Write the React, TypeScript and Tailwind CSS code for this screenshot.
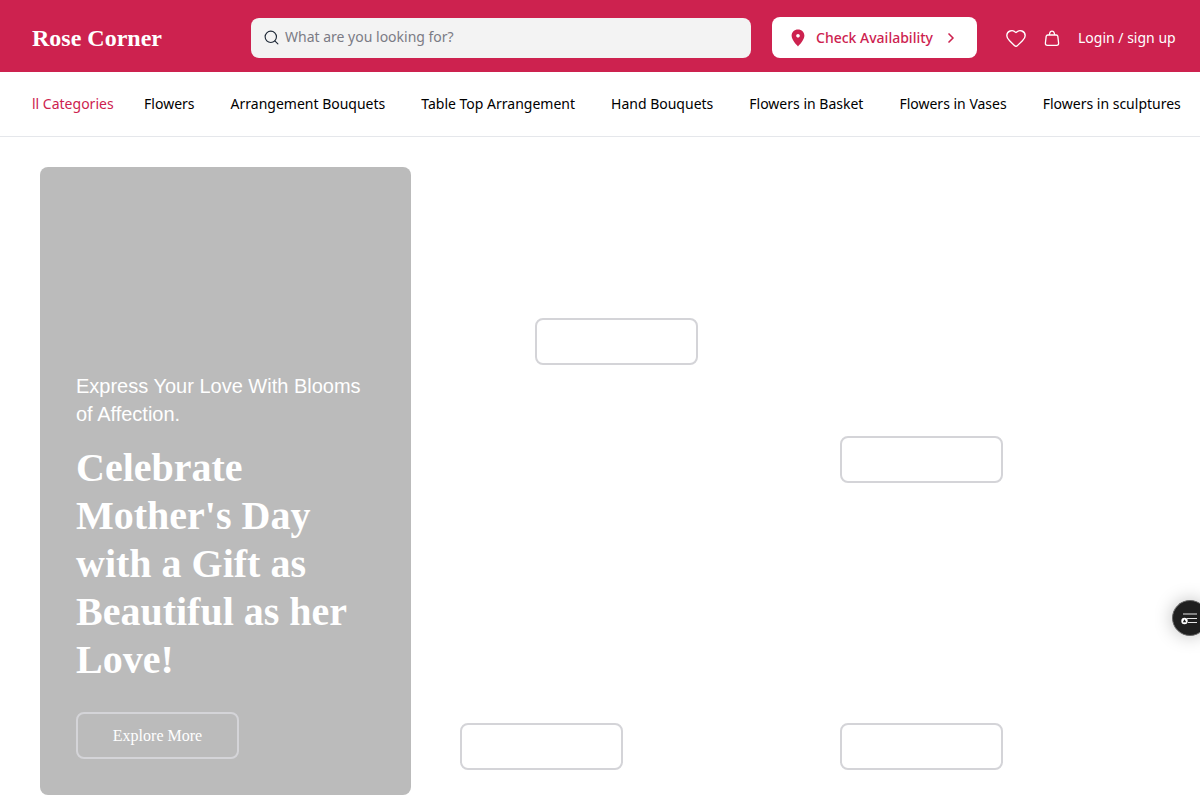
import { Search, ChevronRight, Heart } from "lucide-react";

const navItems = [
  "Flowers",
  "Arrangement Bouquets",
  "Table Top Arrangement",
  "Hand Bouquets",
  "Flowers in Basket",
  "Flowers in Vases",
  "Flowers in sculptures",
];

const EmptyButton = () => (
  <button className="h-[47px] w-[163px] rounded-lg border-2 border-[#d4d4d8] bg-white" />
);

const PinIcon = () => (
  <svg width="14" height="18" viewBox="0 0 14 18" className="shrink-0">
    <path
      fillRule="evenodd"
      d="M7 0.4 C3.3 0.4 0.6 3.1 0.6 6.6 C0.6 10.6 4.6 15 7 17.4 C9.4 15 13.4 10.6 13.4 6.6 C13.4 3.1 10.7 0.4 7 0.4 Z M7 4.9 C8 4.9 8.8 5.7 8.8 6.7 C8.8 7.7 8 8.5 7 8.5 C6 8.5 5.2 7.7 5.2 6.7 C5.2 5.7 6 4.9 7 4.9 Z"
      fill="#cd224f"
    />
  </svg>
);

const BagIcon = () => (
  <svg width="18" height="18" viewBox="0 0 18 18" fill="none" stroke="white" strokeWidth="1.3">
    <path d="M3.2 7.2 C3.4 6.4 4 6 4.8 6 H13.2 C14 6 14.6 6.4 14.8 7.2 L15.6 14 C15.8 15.6 15 16.4 13.6 16.4 H4.4 C3 16.4 2.2 15.6 2.4 14 Z" />
    <path d="M6.4 6 C6.6 3.4 7.6 2.2 9 2.2 C10.4 2.2 11.4 3.4 11.6 6" />
  </svg>
);

const App = () => {
  return (
    <div className="h-screen overflow-hidden bg-white font-['Noto_Sans',sans-serif]">
      <header className="flex h-[72px] items-center bg-[#cd224f] pt-1 pr-6 pl-8">
        <div className="w-[219px] font-['Liberation_Serif',serif] text-2xl font-bold text-white">Rose Corner</div>
        <div className="flex h-10 w-[500px] items-center gap-[5px] rounded-lg bg-[#f3f3f3] px-3 pb-[2px]">
          <Search className="h-[17px] w-[17px] text-[#1f2937]" strokeWidth={1.6} />
          <span className="text-sm text-[#7b7b85]">What are you looking for?</span>
        </div>
        <button className="ml-[21px] -mt-[2px] flex h-[41px] w-[205px] items-center rounded-lg bg-white pt-[2px] pl-[19px] text-sm font-medium text-[#cd224f]">
          <PinIcon />
          <span className="ml-[11px]">Check Availability</span>
          <ChevronRight className="ml-[10px] h-4 w-4" strokeWidth={2.5} />
        </button>
        <Heart className="ml-[28px] h-[22px] w-[22px] text-white" strokeWidth={1.5} />
        <div className="ml-[16px]">
          <BagIcon />
        </div>
        <span className="ml-[17px] text-sm whitespace-nowrap text-white">Login / sign up</span>
      </header>

      <nav className="flex h-[65px] items-center overflow-hidden border-b border-[#e5e7eb] pl-8 text-sm whitespace-nowrap text-black">
        <a className="mr-[30.5px] text-[#cd224f]">ll Categories</a>
        <div className="flex gap-9">
          {navItems.map((item) => (
            <a key={item}>{item}</a>
          ))}
        </div>
      </nav>

      <main className="flex gap-[29px] pt-[30px] pl-10">
        <section className="flex h-[628px] w-[371px] flex-col justify-end rounded-lg bg-[#bbbbbb] px-9 pb-9 text-white">
          <p className="font-['Liberation_Sans',sans-serif] text-xl leading-7">
            Express Your Love With Blooms of Affection.
          </p>
          <h1 className="mt-4 font-['Liberation_Serif',serif] text-[40px] leading-12 font-bold">
            Celebrate Mother's Day with a Gift as Beautiful as her Love!
          </h1>
          <button className="mt-[28px] h-[47px] w-[163px] rounded-lg border-2 border-[#d4d4d8] font-['Liberation_Serif',serif] text-base text-white">
            Explore More
          </button>
        </section>

        <div className="grid h-[628px] w-[740px] grid-cols-2 gap-5">
          <div className="flex flex-col gap-5">
            <div className="flex h-[223px] items-end pb-[25px] pl-[95px]">
              <EmptyButton />
            </div>
            <div className="flex flex-1 items-end pb-[25px] pl-5">
              <EmptyButton />
            </div>
          </div>
          <div className="flex flex-col gap-5">
            <div className="flex h-[341px] items-end pb-[25px] pl-5">
              <EmptyButton />
            </div>
            <div className="flex flex-1 items-end pb-[25px] pl-5">
              <EmptyButton />
            </div>
          </div>
        </div>
      </main>

      {/* floating accessibility widget, cut off by the window edge */}
      <div className="fixed top-[600px] left-[1172px] flex h-9 w-9 items-center justify-center rounded-full border border-[#666] bg-[#1f1f1f] shadow-[0_0_18px_rgba(0,0,0,0.25)]">
        <svg width="20" height="16" viewBox="0 0 20 16" fill="none">
          <path d="M3 4 H17 M7 8.5 H17 M8 12.5 H17" stroke="#e5e5e5" strokeWidth="1.2" />
          <circle cx="4.5" cy="11" r="3.2" fill="white" />
          <path d="M4.5 9.2 L6.2 12.2 H2.8 Z" fill="#1f1f1f" />
        </svg>
      </div>
    </div>
  );
};

export default App;
